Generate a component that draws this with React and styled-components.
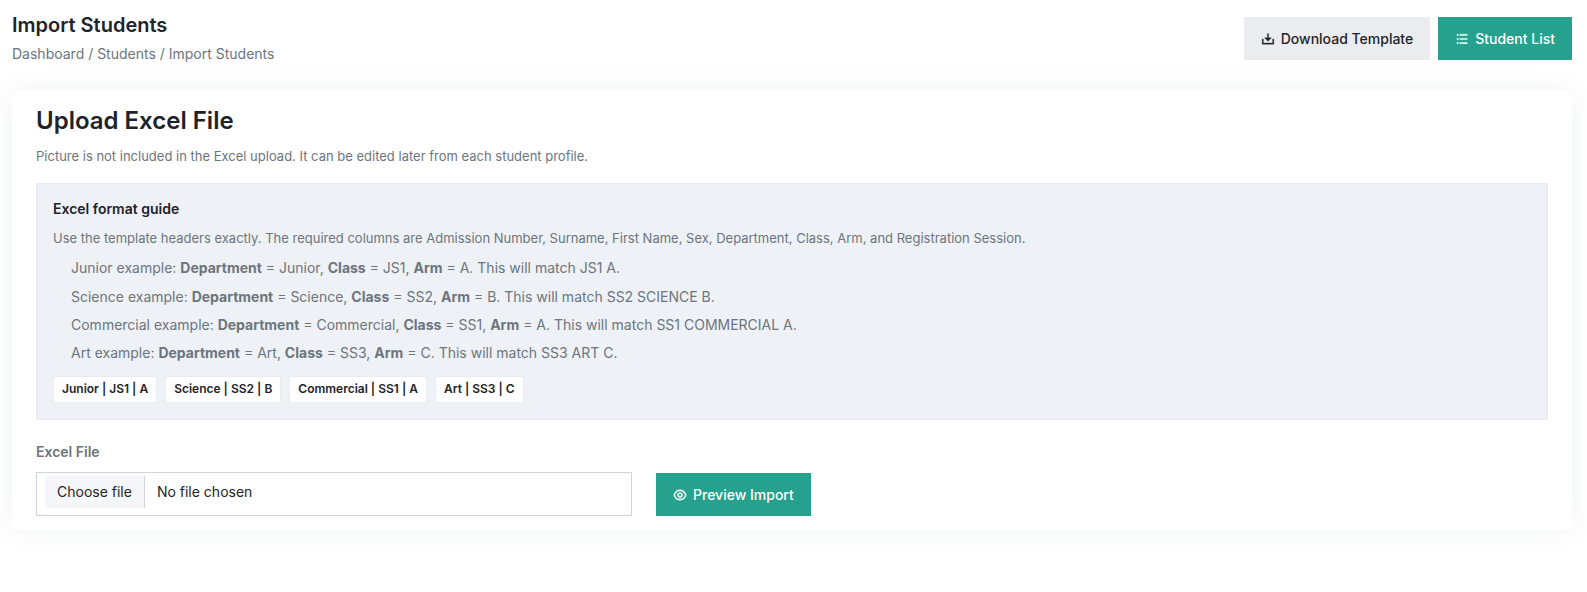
import React from "react";
import styled, { createGlobalStyle } from "styled-components";
import { RiDownload2Line, RiListUnordered, RiEyeLine } from "react-icons/ri";

const Global = createGlobalStyle`
  html, body { margin: 0; padding: 0; background: #fff; }
  body { font-family: Inter, "Liberation Sans", sans-serif; color: #212529; }
  * { box-sizing: border-box; }
`;
const Page = styled.div`
  width: 1587px; height: 592px; overflow: hidden; background: #fff;
  padding: 0 15px 0 12px;
`;
const Header = styled.header`
  display: flex; justify-content: space-between; align-items: flex-start;
  height: 90px; padding-top: 15px;
`;
const Title = styled.h1`
  margin: 0; font-size: 20px; line-height: 20px; font-weight: 600; color: #1f2329;
`;
const Crumbs = styled.div`
  margin-top: 9px; font-size: 14px; line-height: 20px; color: #6c757d;
`;
const Actions = styled.div`display: flex; gap: 8px; margin-top: 2px;`;
const Button = styled.button`
  display: inline-flex; align-items: center; justify-content: center; gap: 6px;
  height: 43px; padding: 0 17px; border: 0; font: 500 14px Inter, sans-serif;
  background: ${p => (p.$primary ? "#25a18e" : "#ebecf0")};
  color: ${p => (p.$primary ? "#fff" : "#212529")};
  svg { width: 14px; height: 14px; stroke: currentColor; stroke-width: 0.6; }
`;
const Card = styled.section`
  height: 440px; padding: 17px 24px; background: #fff; border-radius: 8px;
  box-shadow: 0 0 28px rgba(60, 70, 100, 0.07);
`;
const CardTitle = styled.h2`
  margin: 0; font-size: 24px; line-height: 28px; font-weight: 600; color: #1f2329;
`;
const Note = styled.p`
  margin: 12px 0 0; font-size: 13px; line-height: 19.5px; color: #6c757d;
`;
const Guide = styled.div`
  margin-top: 16.5px; height: 237px; padding: 16px; background: #eef1f6;
  border: 1px solid #e6e9ef;
`;
const GuideTitle = styled.h3`
  margin: 0; font-size: 14px; line-height: 17px; font-weight: 600; color: #1f2329;
`;
const GuideText = styled.p`
  margin: 12px 0 0; font-size: 13px; line-height: 19.5px; color: #6c757d;
`;
const Examples = styled.ul`
  list-style: none; margin: 5.8px 0 0; padding: 0 0 0 18px;
`;
const Example = styled.li`
  font-size: 14px; line-height: 28.3px; color: #6c757d;
  b { font-weight: 700; }
`;
const Chips = styled.div`display: flex; gap: 8px; margin-top: 8.5px;`;
const Chip = styled.span`
  height: 27px; padding: 0 8px 1px; display: inline-flex; align-items: center;
  background: #fff; border: 1px solid #e9ecf1; border-radius: 2px;
  font-size: 12px; font-weight: 600; color: #212529;
`;
const Label = styled.label`
  display: block; margin-top: 23px; font-size: 14px; line-height: 17px; font-weight: 600; color: #6c757d;
`;
const FormRow = styled.div`display: flex; gap: 24px; align-items: flex-end; margin-top: 12px;`;
const FileBox = styled.div`
  width: 596px; height: 44px; padding: 0 8px 4px; display: flex; align-items: center;
  border: 1px solid #d1d3dc; background: #fff; font-size: 14px; line-height: 16px; color: #212529;
`;
const ChooseButton = styled.span`
  height: 32px; padding: 0 12px 1px; display: flex; align-items: center;
  background: #f5f6f9; border-right: 1px solid #d1d3dc;
`;
const FileName = styled.span`margin: 0 0 1px 12px;`;

const examples = [
  ["Junior", "Junior", "JS1", "A", "JS1 A"],
  ["Science", "Science", "SS2", "B", "SS2 SCIENCE B"],
  ["Commercial", "Commercial", "SS1", "A", "SS1 COMMERCIAL A"],
  ["Art", "Art", "SS3", "C", "SS3 ART C"],
];

export default function App() {
  return (
    <Page>
      <Global />
      <Header>
        <div>
          <Title>Import Students</Title>
          <Crumbs>Dashboard / Students / Import Students</Crumbs>
        </div>
        <Actions>
          <Button><RiDownload2Line />Download Template</Button>
          <Button $primary><RiListUnordered />Student List</Button>
        </Actions>
      </Header>
      <Card>
        <CardTitle>Upload Excel File</CardTitle>
        <Note>Picture is not included in the Excel upload. It can be edited later from each student profile.</Note>
        <Guide>
          <GuideTitle>Excel format guide</GuideTitle>
          <GuideText>Use the template headers exactly. The required columns are Admission Number, Surname, First Name, Sex, Department, Class, Arm, and Registration Session.</GuideText>
          <Examples>
            {examples.map(([n, d, c, a, m]) => (
              <Example key={n}>
                {n} example: <b>Department</b> = {d}, <b>Class</b> = {c}, <b>Arm</b> = {a}. This will match {m}.
              </Example>
            ))}
          </Examples>
          <Chips>
            <Chip>Junior | JS1 | A</Chip>
            <Chip>Science | SS2 | B</Chip>
            <Chip>Commercial | SS1 | A</Chip>
            <Chip>Art | SS3 | C</Chip>
          </Chips>
        </Guide>
        <Label>Excel File</Label>
        <FormRow>
          <FileBox>
            <ChooseButton>Choose file</ChooseButton>
            <FileName>No file chosen</FileName>
          </FileBox>
          <Button $primary><RiEyeLine />Preview Import</Button>
        </FormRow>
      </Card>
    </Page>
  );
}
